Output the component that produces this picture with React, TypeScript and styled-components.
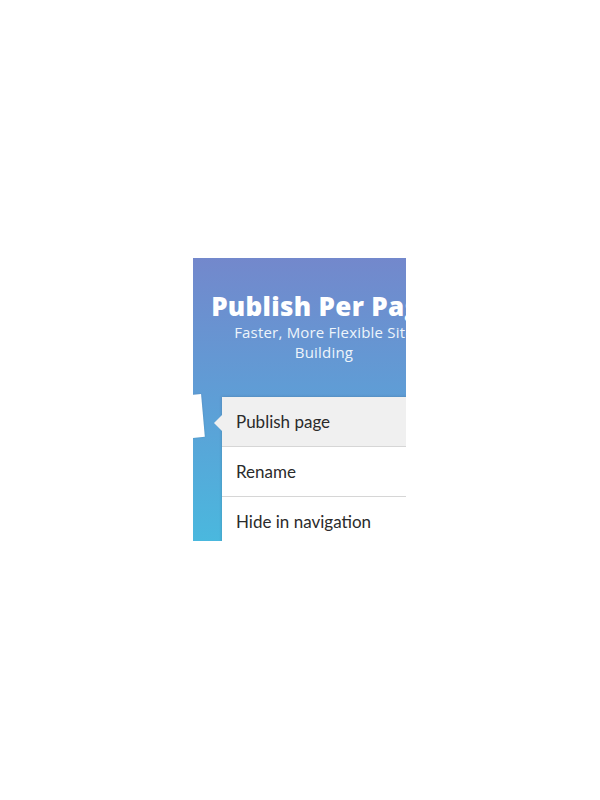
import React from "react";
import styled, { createGlobalStyle } from "styled-components";

const Global = createGlobalStyle`
  html, body { margin: 0; padding: 0; background: #ffffff; }
  body { font-family: "Open Sans", "Liberation Sans", sans-serif; }
`;

const Page = styled.div`
  padding: 258px 0 0 193px;
  height: 800px;
  box-sizing: border-box;
`;

const Frame = styled.div`
  width: 213px;
  height: 283px;
  overflow: hidden;
  position: relative;
`;

const Card = styled.div`
  position: relative;
  width: 262px;
  height: 283px;
  box-sizing: border-box;
  padding-top: 33px;
  background: linear-gradient(180deg, #7388cc 0%, #5e9ed6 50%, #4ab8de 100%);
  display: flex;
  flex-direction: column;
`;

const Title = styled.h1`
  margin: 0;
  font-family: "Open Sans", sans-serif;
  font-weight: 800;
  font-size: 26px;
  letter-spacing: 0.3px;
  line-height: 30px;
  color: #ffffff;
  text-align: center;
  white-space: nowrap;
`;

const Subtitle = styled.p`
  margin: 1px auto 0;
  width: 200px;
  font-family: "Open Sans", sans-serif;
  font-weight: 400;
  font-size: 15px;
  letter-spacing: 0.2px;
  line-height: 20px;
  color: #eef5fb;
  text-align: center;
`;

const Thumb = styled.div`
  position: absolute;
  left: -14px;
  top: 137px;
  width: 24px;
  height: 43px;
  background: #ffffff;
  transform: rotate(-5deg);
  box-shadow: 0 0 2px rgba(0, 0, 0, 0.15);
`;

const Menu = styled.ul`
  list-style: none;
  margin: 35px 0 0 29px;
  padding: 0;
  background: #ffffff;
  box-shadow: 0 0 3px rgba(0, 0, 0, 0.18);
  flex: 1;
`;

const Item = styled.li<{ $active?: boolean }>`
  position: relative;
  height: 49px;
  line-height: 49px;
  padding-left: 14px;
  font-family: Lato, "Open Sans", sans-serif;
  font-size: 17px;
  color: #2b2b2b;
  background: ${(p) => (p.$active ? "#f0f0f0" : "#ffffff")};
  border-bottom: 1px solid #d6d6d6;

  ${(p) =>
    p.$active &&
    `
    &::before {
      content: "";
      position: absolute;
      left: -8px;
      top: 18px;
      width: 0;
      height: 0;
      border-top: 8px solid transparent;
      border-bottom: 8px solid transparent;
      border-right: 8px solid #f0f0f0;
    }
  `}
`;

export default function App() {
  return (
    <>
      <Global />
      <Page>
        <Frame>
          <Card>
            <Title>Publish Per Page</Title>
            <Subtitle>Faster, More Flexible Site Building</Subtitle>
            <Thumb />
            <Menu>
              <Item $active>Publish page</Item>
              <Item>Rename</Item>
              <Item>Hide in navigation</Item>
            </Menu>
          </Card>
        </Frame>
      </Page>
    </>
  );
}
